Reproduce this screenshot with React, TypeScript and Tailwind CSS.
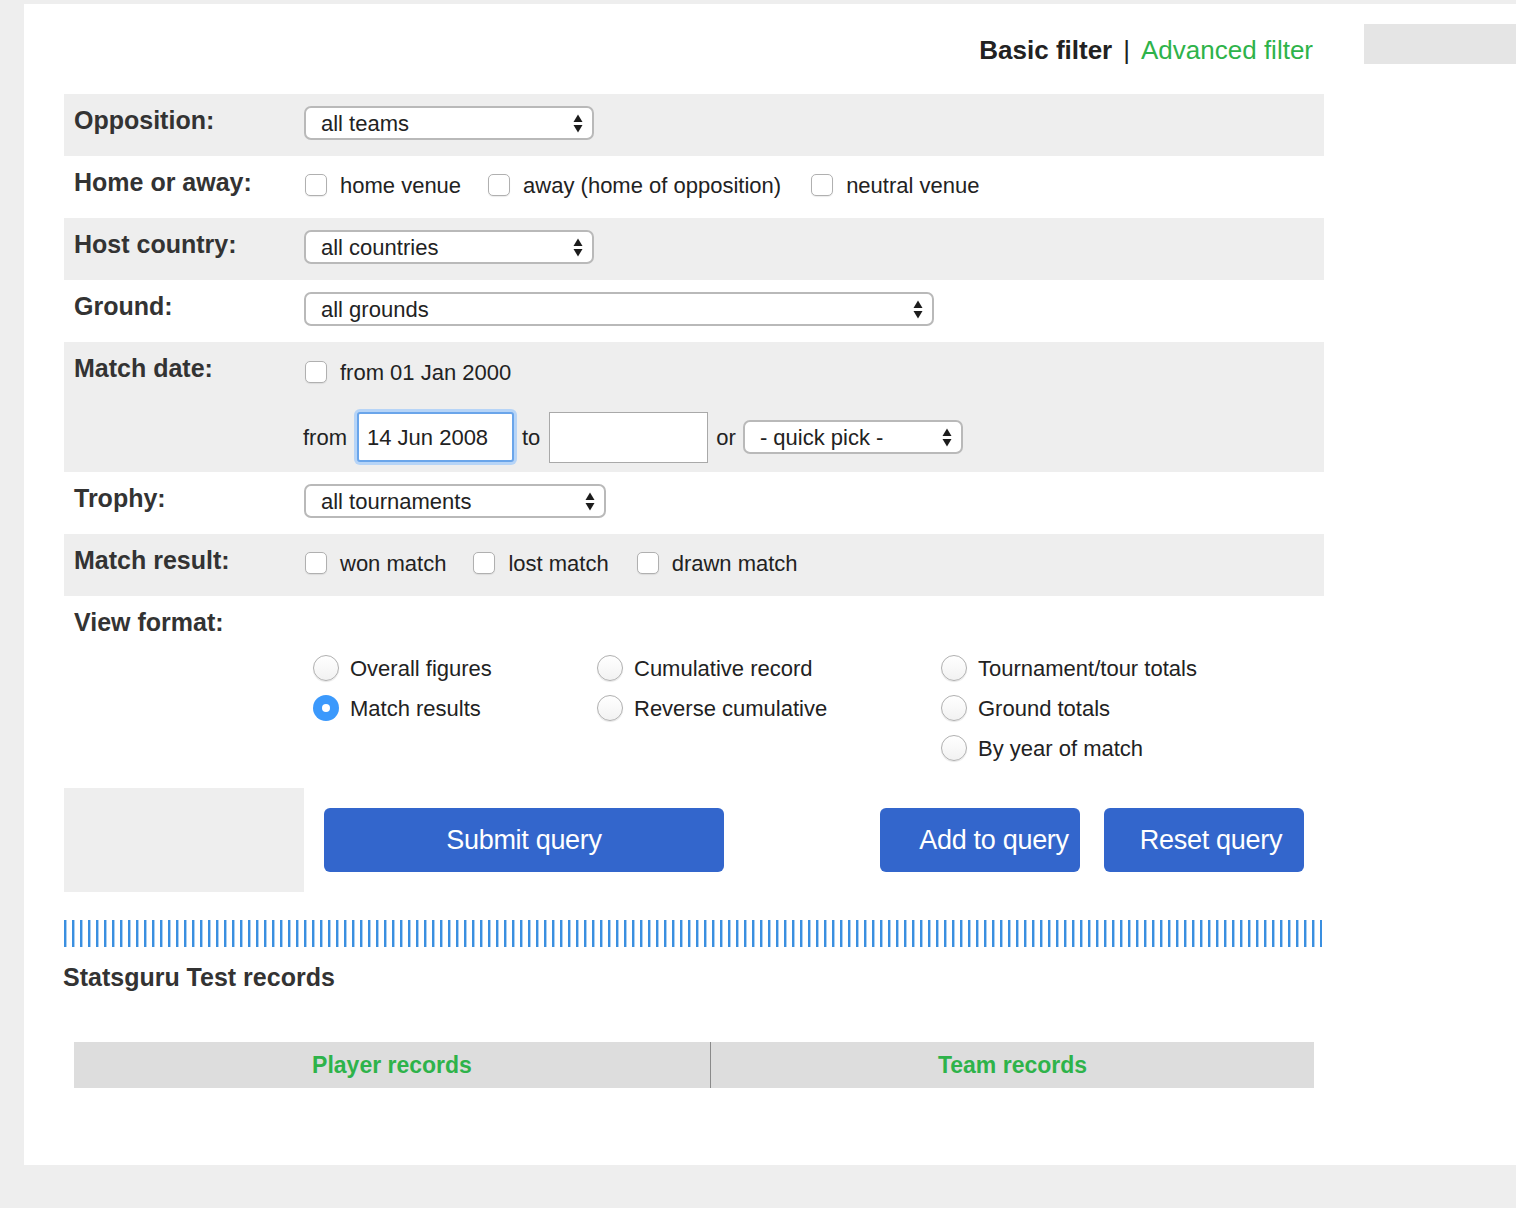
import React from 'react';

function Arrows() {
  return (
    <svg width="10" height="19" viewBox="0 0 10 19" className="shrink-0">
      <path d="M5 0.5 L9.5 8 H0.5 Z" fill="#1c1c1c" />
      <path d="M5 18.5 L9.5 11 H0.5 Z" fill="#1c1c1c" />
    </svg>
  );
}

function Select({ label, className }: { label: string; className: string }) {
  return (
    <div
      className={`${className} h-[34px] rounded-[7px] border-2 border-[#b9b9b9] bg-white pl-[15px] pr-[9px] flex items-center justify-between text-[22px] text-[#222]`}
    >
      <span>{label}</span>
      <Arrows />
    </div>
  );
}

function Checkbox() {
  return <span className="w-[22px] h-[22px] shrink-0 rounded-[5px] border border-[#b0b0b0] bg-white shadow-[0_1px_1px_rgba(0,0,0,0.08)]" />;
}

function CheckItem({ label, className = '' }: { label: string; className?: string }) {
  return (
    <label className={`flex items-center ${className}`}>
      <Checkbox />
      <span className="ml-[13px] text-[22px] text-[#222]">{label}</span>
    </label>
  );
}

function Radio({ label, checked = false }: { label: string; checked?: boolean }) {
  return (
    <div className="h-[40px] flex items-center">
      {checked ? (
        <span className="ml-[9px] w-[26px] h-[26px] rounded-full bg-[#3b99fc] flex items-center justify-center">
          <span className="w-[8px] h-[8px] rounded-full bg-white" />
        </span>
      ) : (
        <span className="ml-[9px] w-[26px] h-[26px] rounded-full border border-[#b0b0b0] bg-gradient-to-b from-white to-[#f2f2f2] shadow-[0_1px_1px_rgba(0,0,0,0.1)]" />
      )}
      <span className="ml-[11px] text-[22px] text-[#222]">{label}</span>
    </div>
  );
}

function Row({
  label,
  gray = false,
  className,
  children,
}: {
  label: string;
  gray?: boolean;
  className: string;
  children?: React.ReactNode;
}) {
  return (
    <div className={`flex ${gray ? 'bg-[#eeeeee]' : 'bg-white'} ${className}`}>
      <div className="w-[240px] shrink-0 pl-[10px] pt-[12px] text-[25px] leading-[28px] font-bold text-[#333]">{label}</div>
      <div className="flex-1 pt-[12px]">{children}</div>
    </div>
  );
}

function BlueButton({ label, className }: { label: string; className: string }) {
  return (
    <button className={`${className} h-[64px] rounded-[6px] bg-[#3366cc] text-white text-[27px] tracking-[-0.3px] flex items-center justify-center`}>
      {label}
    </button>
  );
}

export default function App() {
  return (
    <div className="min-h-screen bg-[#eeeeee] pt-[4px] pl-[24px] font-['Liberation_Sans',Arial,sans-serif]">
      <div className="bg-white h-[1161px] flex">
        <div className="ml-[40px] w-[1260px] shrink-0">
          {/* Filter switch */}
          <div className="h-[90px] flex justify-end pr-[11px] pt-[30px] text-[26px] leading-[32px]">
            <span className="font-bold text-[#222]">Basic filter</span>
            <span className="ml-[11px] text-[#222]">|</span>
            <span className="ml-[11px] text-[#2eb34a]">Advanced filter</span>
          </div>

          <Row label="Opposition:" gray className="h-[62px]">
            <Select label="all teams" className="w-[290px]" />
          </Row>

          <Row label="Home or away:" className="h-[62px]">
            <div className="h-[34px] flex items-center pl-[1px]">
              <CheckItem label="home venue" />
              <CheckItem label="away (home of opposition)" className="ml-[27px]" />
              <CheckItem label="neutral venue" className="ml-[30px]" />
            </div>
          </Row>

          <Row label="Host country:" gray className="h-[62px]">
            <Select label="all countries" className="w-[290px]" />
          </Row>

          <Row label="Ground:" className="h-[62px]">
            <Select label="all grounds" className="w-[630px]" />
          </Row>

          <Row label="Match date:" gray className="h-[130px]">
            <div className="h-[34px] flex items-center pl-[1px] mt-[1px]">
              <CheckItem label="from 01 Jan 2000" />
            </div>
            <div className="mt-[22px] h-[52px] flex items-center text-[22px] text-[#222]">
              <span className="-ml-[1px]">from</span>
              <div className="ml-[10px] w-[157px] h-[50px] rounded-[3px] border-2 border-[#6aa5ea] bg-white shadow-[0_0_0_3px_#b6d4f7] flex items-center pl-[8px]">
                14 Jun 2008
              </div>
              <span className="ml-[8px]">to</span>
              <div className="ml-[9px] w-[159px] h-[51px] border border-[#a9a9a9] bg-white" />
              <span className="ml-[8px]">or</span>
              <Select label="- quick pick -" className="ml-[7px] w-[220px]" />
            </div>
          </Row>

          <Row label="Trophy:" className="h-[62px]">
            <Select label="all tournaments" className="w-[302px]" />
          </Row>

          <Row label="Match result:" gray className="h-[62px]">
            <div className="h-[34px] flex items-center pl-[1px]">
              <CheckItem label="won match" />
              <CheckItem label="lost match" className="ml-[27px]" />
              <CheckItem label="drawn match" className="ml-[28px]" />
            </div>
          </Row>

          <Row label="View format:" className="h-[192px]">
            <div className="mt-[40px] flex">
              <div className="w-[284px] flex flex-col">
                <Radio label="Overall figures" />
                <Radio label="Match results" checked />
              </div>
              <div className="w-[344px] flex flex-col">
                <Radio label="Cumulative record" />
                <Radio label="Reverse cumulative" />
              </div>
              <div className="flex flex-col">
                <Radio label="Tournament/tour totals" />
                <Radio label="Ground totals" />
                <Radio label="By year of match" />
              </div>
            </div>
          </Row>

          {/* Actions */}
          <div className="h-[104px] flex">
            <div className="w-[240px] h-full bg-[#eeeeee]" />
            <div className="pt-[20px] flex items-start">
              <BlueButton label="Submit query" className="ml-[20px] w-[400px]" />
              <BlueButton label="Add to query" className="ml-[156px] w-[200px] pl-[28px]" />
              <BlueButton label="Reset query" className="ml-[24px] w-[200px] pl-[14px]" />
            </div>
          </div>

          {/* Striped divider */}
          <div className="mt-[28px] w-[1258px] h-[27px] bg-[repeating-linear-gradient(90deg,#3a8fe0_0px,#3a8fe0_2px,#a9cff2_2px,#a9cff2_3px,transparent_3px,transparent_8px)]" />

          <h2 className="mt-[16px] -ml-[1px] text-[25px] leading-[28px] font-bold text-[#333]">Statsguru Test records</h2>

          <div className="mt-[51px] ml-[10px] w-[1240px] h-[46px] flex bg-[#dddddd] text-[23px] font-bold text-[#2eb34a]">
            <div className="w-[637px] border-r border-[#8a8a8a] flex items-center justify-center">Player records</div>
            <div className="flex-1 flex items-center justify-center">Team records</div>
          </div>
        </div>

        <div className="ml-[40px] mt-[20px] w-[152px] h-[40px] bg-[#e5e5e5]" />
      </div>
    </div>
  );
}
